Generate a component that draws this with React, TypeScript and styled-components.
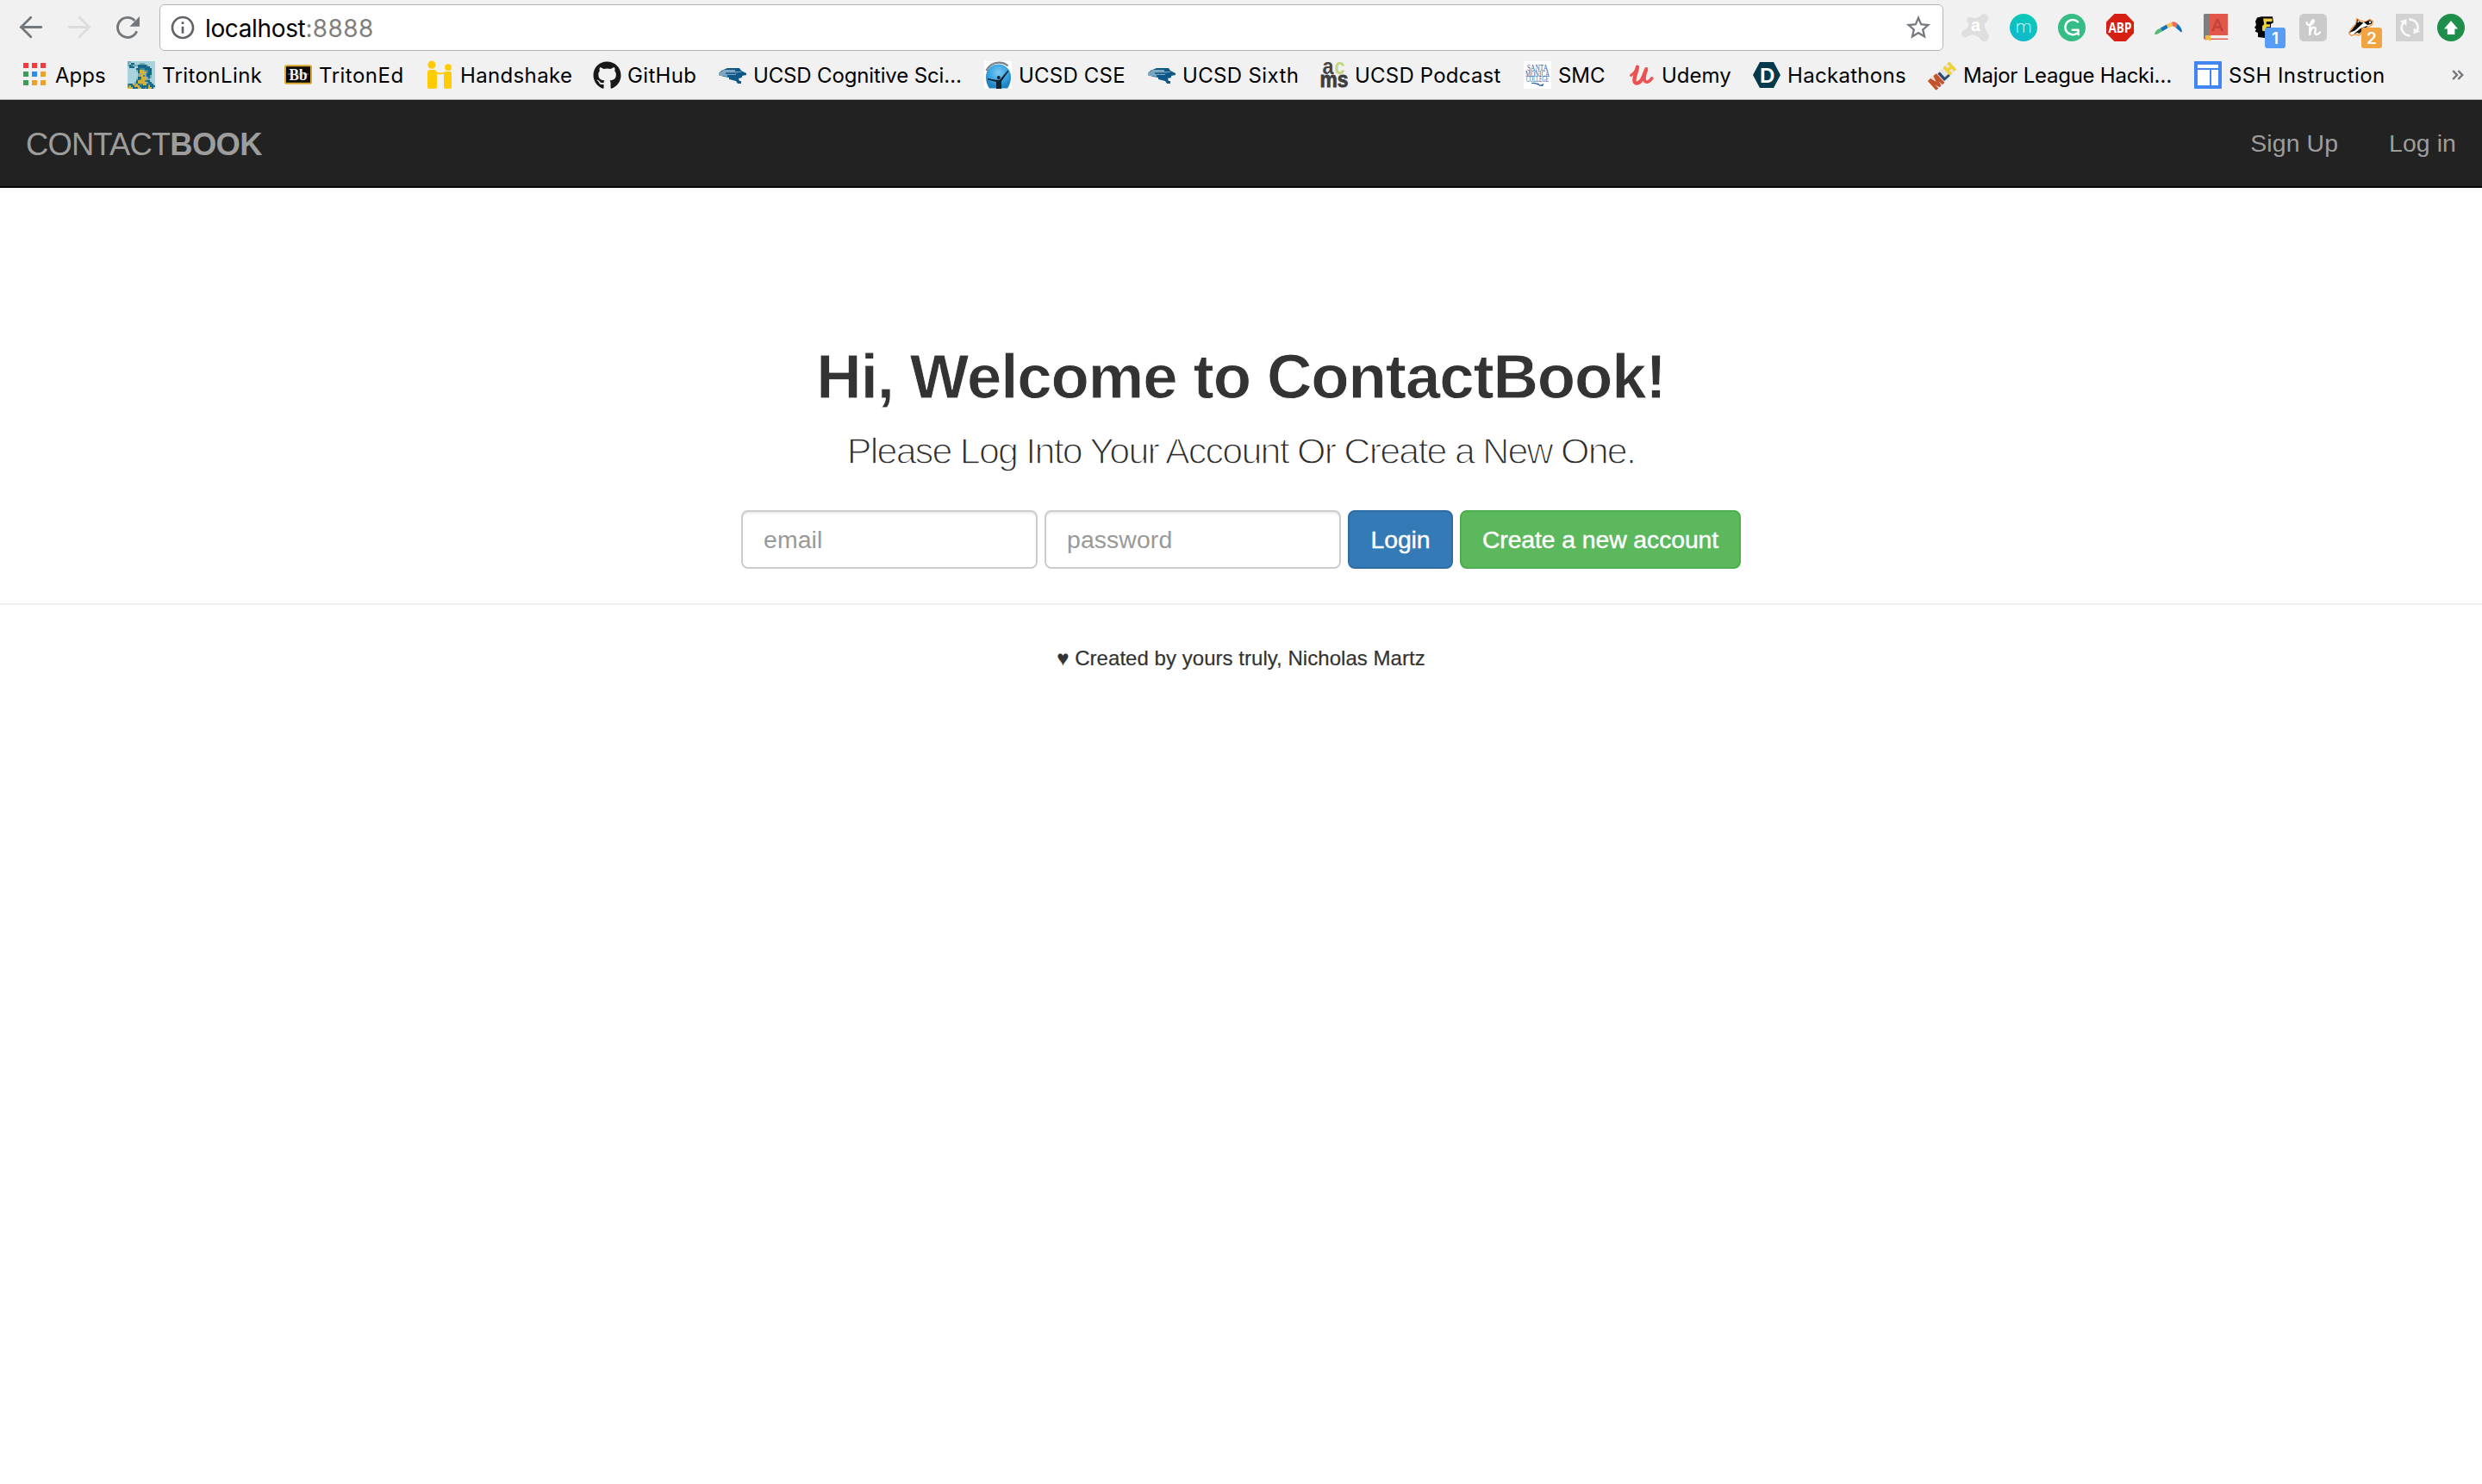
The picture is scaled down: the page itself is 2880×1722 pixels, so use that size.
import React from "react";
import styled, { createGlobalStyle } from "styled-components";
import { FaGithub } from "react-icons/fa";
import { MdStarBorder, MdInfoOutline } from "react-icons/md";

const GlobalStyle = createGlobalStyle`
  * { box-sizing: border-box; }
  html, body { margin: 0; padding: 0; background: #fff; }
  body { font-family: "Liberation Sans", Arial, sans-serif; color: #333; overflow: hidden; }
`;

const Browser = styled.div`
  display: flex;
  flex-direction: column;
  min-height: 1722px;
`;

/* ---------- browser chrome ---------- */

const Chrome = styled.header`
  display: flex;
  flex-direction: column;
  height: 116px;
  background: #f1f1f1;
  border-bottom: 1px solid #b0b0b0;
  font-family: Inter, "Liberation Sans", sans-serif;
  color: #000;
`;

const AddressRow = styled.div`
  display: flex;
  align-items: center;
  height: 64px;
  padding: 0 20px;
`;

const NavControls = styled.div`
  display: flex;
  gap: 24px;
  margin-right: 21px;
`;

const Glyph = styled.svg`
  display: block;
  flex: none;
  width: 32px;
  height: 32px;
  overflow: visible;
`;

const AddressBar = styled.div`
  display: flex;
  align-items: center;
  flex: 1;
  height: 54px;
  padding: 0 11px 0 10px;
  background: #fff;
  border: 1px solid #b3b3b3;
  border-radius: 6px;
  color: #5f6368;
`;

const AddressText = styled.span`
  flex: 1;
  margin-left: 10px;
  padding-top: 1px;
  font-size: 28px;
  line-height: 40px;
  letter-spacing: -0.36px;
  color: #000;
`;

const Port = styled.span`
  letter-spacing: 0.4px;
  color: #7f7f7f;
`;

const Extensions = styled.div`
  display: flex;
  gap: 24px;
  margin-left: 21px;
`;

const Extension = styled.div<{ $pull?: number }>`
  position: relative;
  width: 32px;
  height: 32px;
  margin-left: ${(p) => -(p.$pull ?? 0)}px;
`;

const Badge = styled.span<{ $color: string }>`
  position: absolute;
  left: 16px;
  top: 16px;
  width: 24px;
  height: 24px;
  border-radius: 3px;
  background: ${(p) => p.$color};
  color: #fff;
  font-weight: 600;
  font-size: 19px;
  line-height: 26px;
  text-align: center;
`;

const BookmarkRow = styled.nav`
  display: flex;
  align-items: center;
  height: 46px;
  padding: 0 21px 0 24px;
`;

const Bookmark = styled.div<{ $width: number }>`
  display: flex;
  align-items: center;
  gap: 8px;
  flex: none;
  width: ${(p) => p.$width}px;
`;

const BookmarkLabel = styled.span<{ $tracking: number }>`
  padding-top: 1px;
  font-size: 24px;
  line-height: 32px;
  letter-spacing: ${(p) => p.$tracking}px;
  white-space: nowrap;
`;

const Overflow = styled(Glyph)`
  margin-left: auto;
  width: 14px;
  height: 12px;
`;

/* ---------- page ---------- */

const Navbar = styled.nav`
  display: flex;
  align-items: center;
  justify-content: space-between;
  height: 102px;
  padding: 0 30px;
  background: #222;
  border-bottom: 2px solid #080808;
  color: #9d9d9d;
`;

const Brand = styled.a`
  padding-top: 3px;
  font-size: 36.4px;
  line-height: 40px;
  letter-spacing: -0.85px;

  b { letter-spacing: -0.6px; }
`;

const NavLinks = styled.div`
  display: flex;
  gap: 59px;
`;

const NavLink = styled.a`
  font-size: 28.4px;
  line-height: 40px;
  letter-spacing: 0.1px;
`;

const Hero = styled.main`
  display: flex;
  flex-direction: column;
  align-items: center;
  height: 482px;
  padding-top: 179px;
`;

const Title = styled.h1`
  margin: 0;
  font-size: 72.6px;
  font-weight: 700;
  line-height: 80px;
  letter-spacing: -1.1px;
  -webkit-text-stroke: 0.8px #fff;
`;

const Subtitle = styled.p`
  margin: 23px 0 0;
  font-size: 43px;
  font-weight: 400;
  line-height: 46px;
  letter-spacing: -1.78px;
  color: #2b2b2b;
  -webkit-text-stroke: 1.3px #fff;
`;

const LoginForm = styled.form`
  display: flex;
  gap: 8px;
  margin-top: 46px;
`;

const Field = styled.input`
  width: 344px;
  height: 68px;
  padding: 12px 24px;
  border: 2px solid #ccc;
  border-radius: 8px;
  background: #fff;
  box-shadow: inset 0 2px 2px rgba(0, 0, 0, 0.075);
  font: 28.4px/40px "Liberation Sans", Arial, sans-serif;
  letter-spacing: 0.1px;
  outline: none;

  &::placeholder { color: #999; opacity: 1; }
`;

const Button = styled.button<{ $fill: string; $edge: string; $width: number }>`
  width: ${(p) => p.$width}px;
  height: 68px;
  padding: 0;
  border: 2px solid ${(p) => p.$edge};
  border-radius: 8px;
  background: ${(p) => p.$fill};
  color: #fff;
  font: 28.4px/40px "Liberation Sans", Arial, sans-serif;
  letter-spacing: -0.1px;
  -webkit-text-stroke: 0.4px #fff;
`;

const Footer = styled.footer`
  border-top: 2px solid #eee;
  padding-top: 45px;
  font-size: 24px;
  line-height: 34px;
  letter-spacing: 0.04px;
  text-align: center;
  -webkit-text-stroke: 0.2px #333;
`;

/* ---------- icons ---------- */

const SERIF = "Liberation Serif";
const SANS = "Liberation Sans";

const BackIcon = ({ color }: { color: string }) => (
  <Glyph viewBox="0 0 32 32" fill="none" stroke={color} strokeWidth="2.8" strokeLinecap="round">
    <path d="M4.5 15.5H27.8" />
    <path d="M15.8 4.3L4.5 15.5L15.8 26.7" strokeLinejoin="miter" />
  </Glyph>
);

const ForwardIcon = ({ color }: { color: string }) => (
  <Glyph viewBox="0 0 32 32" fill="none" stroke={color} strokeWidth="2.8" strokeLinecap="round">
    <path d="M4.2 15.5H27.5" />
    <path d="M16.2 4.3L27.5 15.5L16.2 26.7" />
  </Glyph>
);

const ReloadIcon = () => (
  <Glyph viewBox="0 0 32 32">
    <path d="M26.7 20.2A11.5 11.5 0 1 1 24.4 8" fill="none" stroke="#72777c" strokeWidth="2.9" />
    <path d="M30 3V14.7H18.5Z" fill="#72777c" />
  </Glyph>
);

const AppsIcon = () => {
  const colors = ["#f33a3c", "#f33a3c", "#f33a3c", "#3b9c57", "#2a8df4", "#eea02a", "#3b9c57", "#eea02a", "#eea02a"];
  return (
    <Glyph viewBox="0 0 32 32">
      {colors.map((c, i) => (
        <rect key={i} x={3 + (i % 3) * 10} y={2 + Math.floor(i / 3) * 10} width="6" height="6" fill={c} />
      ))}
    </Glyph>
  );
};

const TRITON_ROWS = [
  "bbaaaaaaaaaaaaaa",
  "baddaaabbbaaaaaa",
  "bdcbbbdddddbaaaa",
  "adddaadddddddaaa",
  "aaaaaddcccddddaa",
  "aaaaabdyybccddaa",
  "aaaaaadyyyycddaa",
  "aaaaaabbyybdddaa",
  "aaaaaabyycbddbaa",
  "aaaaaaddyyybdbaa",
  "aaaaabdcyyybbaaa",
  "aaaaadyyyycddaaa",
  "aaaabdyyyyybddaa",
  "cddybydccyydcdda",
  "cyddyyydddddyddd",
  "yyydddyyddcdyyda",
];
const TRITON_COLORS: Record<string, string> = { a: "#a9d3dc", b: "#79a9b3", c: "#4f8583", d: "#13698c", y: "#d7b232" };

const TritonLinkIcon = () => (
  <Glyph viewBox="0 0 16 16" shapeRendering="crispEdges">
    {TRITON_ROWS.flatMap((row, y) =>
      [...row].map((c, x) => <rect key={`${x}-${y}`} x={x} y={y} width="1" height="1" fill={TRITON_COLORS[c]} />)
    )}
  </Glyph>
);

const TritonEdIcon = () => (
  <Glyph viewBox="0 0 32 32">
    <rect x="1" y="5.2" width="30" height="20.6" rx="1.6" fill="#0b0b0b" stroke="#d9a72c" strokeWidth="2" />
    <path d="M4 15H28" stroke="#8a8a8a" strokeWidth="1" />
    <text x="16" y="21.8" textAnchor="middle" textLength="21" lengthAdjust="spacingAndGlyphs" fontFamily={SERIF} fontSize="19" fontWeight="700" fill="#f4f4f4">Bb</text>
  </Glyph>
);

const HandshakeIcon = () => (
  <Glyph viewBox="0 0 32 32" fill="#ffcb05">
    <circle cx="7" cy="4.2" r="4.6" />
    <circle cx="26" cy="7.2" r="3.9" />
    <path d="M2 13.5Q2 10 5 10H9.5Q12.3 10 12.8 12.4Q18 14.6 21.5 12.6Q22.3 12 24 12H28Q30 12 30 14V30Q30 32 28 32H23Q21 32 21 30V14.6Q17 16.2 13 14.5V30Q13 32 11 32H4Q2 32 2 30Z" />
  </Glyph>
);

const GithubIcon = styled(FaGithub)`
  flex: none;
  width: 33px;
  height: 33px;
  margin-right: -1px;
  color: #191717;
`;

const TridentIcon = () => (
  <Glyph viewBox="0 0 32 32">
    <path d="M10 8H24L26 11L32 14V16L27 17V19L23 20L24 23H26V26H22L20 23L12 21V19L6 18L0 16V14L3 11Z" fill="#0d5886" />
    <path d="M6 10H19V12H26V13H8V15H20V16H10V18L0 16.5V14Z" fill="#7ea6c0" />
    <path d="M8 13H22V14.6H8Z" fill="#2a6c95" />
  </Glyph>
);

const CseIcon = () => (
  <Glyph viewBox="0 0 32 32">
    <defs>
      <radialGradient id="cse" cx="0.5" cy="0.35" r="0.6">
        <stop offset="0" stopColor="#7cc9f2" />
        <stop offset="0.6" stopColor="#3ba6e2" />
        <stop offset="1" stopColor="#1f82c2" />
      </radialGradient>
    </defs>
    <rect width="32" height="32" fill="#fff" />
    <path d="M6 31.5Q2 26 2 18A14.5 14.5 0 0 1 31 18Q31 26 27 31.5Z" fill="url(#cse)" />
    <path d="M2.5 11Q7 1.8 17 1.6Q24 1.6 27.5 5.5" fill="none" stroke="#7b8289" strokeWidth="2.4" />
    <path d="M4 20L13.5 21.8H18L27.4 10.6L28.4 11.6L20 23.5V32H14V24L4 21.4Z" fill="#16222e" />
    <circle cx="16.8" cy="19" r="2" fill="#16222e" />
  </Glyph>
);

const AcmsIcon = () => (
  <Glyph viewBox="0 0 32 32" fontFamily={SANS} fontWeight="700" fontSize="25">
    <text x="2.5" y="14.6" textLength="13" lengthAdjust="spacingAndGlyphs" fill="#444">a</text>
    <text x="16.5" y="14.6" textLength="12" lengthAdjust="spacingAndGlyphs" fill="#c3d67c">c</text>
    <text x="-0.5" y="30" textLength="33" lengthAdjust="spacingAndGlyphs" fill="#3d3d3d" stroke="#3d3d3d" strokeWidth="0.8">ms</text>
  </Glyph>
);

const SmcIcon = () => (
  <Glyph viewBox="0 0 32 32">
    <rect width="32" height="32" fill="#fff" />
    <g fontFamily={SERIF} fontSize="9.5" fill="#2f63a8">
      <text x="4" y="10.5" textLength="24" lengthAdjust="spacingAndGlyphs">SANTA</text>
      <text x="2" y="17.5" textLength="28" lengthAdjust="spacingAndGlyphs">MONICA</text>
      <text x="3" y="24" textLength="26" lengthAdjust="spacingAndGlyphs">COLLEGE</text>
    </g>
    <path d="M9 25.5Q14 25 17 27Q20 29.3 23 26.5M16 26Q19 29 22.5 28.2" fill="none" stroke="#2f63a8" strokeWidth="1.2" />
  </Glyph>
);

const UdemyIcon = () => (
  <Glyph viewBox="0 0 32 32" fill="none" stroke="#ec5252" strokeLinecap="round" strokeLinejoin="round">
    <path d="M4.5 16.5C7.5 14.5 10.5 10.5 11.6 7.5" strokeWidth="3" />
    <path d="M12 6.8C11.4 12 8.2 18 8.4 22.5C8.6 27.2 15 26.4 18.4 19L22 10" strokeWidth="4.4" />
    <path d="M22.4 8.8C21 13.5 19.4 18 20.2 22C21.2 25.8 26 24.4 28.8 19.8" strokeWidth="3.6" />
  </Glyph>
);

const HackathonsIcon = () => (
  <Glyph viewBox="0 0 32 32">
    <path d="M8 1H24L32 16L24 31H8L0 16Z" fill="#053a4c" />
    <text x="16.6" y="24.6" textAnchor="middle" fontFamily={SANS} fontWeight="700" fontSize="24" fill="#fff">D</text>
  </Glyph>
);

const MlhIcon = () => (
  <Glyph viewBox="0 0 32 32" fontFamily={SANS} fontWeight="700">
    <g transform="translate(16 16) rotate(-42) scale(0.94)">
      <path d="M-17 -8L-4 -7L7 -6L18 -7V6L7 8L-16 9Z" fill="#e4dcd8" opacity="0.6" />
      <text x="-19" y="8" textLength="15" lengthAdjust="spacingAndGlyphs" fontSize="20" fill="#c4532d" stroke="#c4532d" strokeWidth="1.6">M</text>
      <text x="-4" y="6.4" textLength="10" lengthAdjust="spacingAndGlyphs" fontSize="16" fill="#2c4a68" stroke="#2c4a68" strokeWidth="1">L</text>
      <text x="6" y="6" textLength="12" lengthAdjust="spacingAndGlyphs" fontSize="17" fill="#f0d22c" stroke="#f0d22c" strokeWidth="1">H</text>
    </g>
  </Glyph>
);

const SitesIcon = () => (
  <Glyph viewBox="0 0 32 32">
    <rect width="32" height="32" rx="0.8" fill="#4285f4" />
    <path d="M4 4H28V8H4ZM4 10H18V28H4ZM20 10H28V28H20Z" fill="#fff" />
  </Glyph>
);

const AvastIcon = () => (
  <Glyph viewBox="0 0 32 32">
    <path d="M6.5 6Q8 2.5 12 4.2Q16.5 6.4 21.5 3Q24-1 28.5 .6Q33 4.6 29.5 9Q25 12 28 18Q29.5 21.5 31 23.5Q33 28 30 31Q26 33.6 23 30.5Q19 25.5 14 24.6Q9 24.4 6.5 26.4Q2 28.6 .4 25Q-1 20.6 3.6 18.8Q8.6 16 8 11.5Q6 9 6.5 6Z" fill="#dedede" />
    <text x="16.4" y="20.4" textAnchor="middle" fontFamily={SANS} fontSize="19.5" fontWeight="700" fill="#fff">a</text>
  </Glyph>
);

const MIcon = () => (
  <Glyph viewBox="0 0 32 32">
    <defs>
      <linearGradient id="mgrad" x1="0.7" y1="0" x2="0.3" y2="1">
        <stop offset="0" stopColor="#09cbb5" />
        <stop offset="1" stopColor="#0fb7d0" />
      </linearGradient>
    </defs>
    <circle cx="16" cy="16" r="16" fill="url(#mgrad)" />
    <text x="16" y="21.6" textAnchor="middle" fontFamily="Roboto" fontWeight="200" fontSize="21" fill="#eafffd">m</text>
  </Glyph>
);

const GrammarlyIcon = () => (
  <Glyph viewBox="0 0 32 32">
    <circle cx="16" cy="16" r="16" fill="#36bd85" />
    <path d="M23 9.4A8.6 8.6 0 1 0 22.2 22.4" fill="none" stroke="#fff" strokeWidth="2.5" strokeLinecap="round" />
    <path d="M16.8 18.8H23.6V24.2" fill="none" stroke="#fff" strokeWidth="2.4" strokeLinejoin="round" strokeLinecap="round" />
  </Glyph>
);

const AbpIcon = () => (
  <Glyph viewBox="0 0 32 32">
    <path d="M9.4 0H22.6L32 9.4V22.6L22.6 32H9.4L0 22.6V9.4Z" fill="#d61f13" />
    <text x="16" y="21.6" textAnchor="middle" textLength="27" lengthAdjust="spacingAndGlyphs" fontFamily="Open Sans" fontWeight="700" fontSize="16" fill="#fff">ABP</text>
  </Glyph>
);

const BoomerangIcon = () => (
  <Glyph viewBox="0 0 32 32">
    <path d="M.2 24Q-.2 21 3.6 18.2L7.2 16.2L8.6 20.4Q3.5 24.2 .2 24Z" fill="#5bb974" />
    <path d="M7.2 16.2L14 12.6L15.6 16.6L8.6 20.4Z" fill="#1173b8" />
    <path d="M14 12.6L20.2 9.4L20.8 14.6L15.6 16.6Z" fill="#f8c24f" />
    <path d="M20.2 9.4Q24.2 8.4 26.6 11.4L25 16.4Q23 14.2 20.8 14.6Z" fill="#f06a4b" />
    <path d="M26.6 11.4Q31.6 16 32 20.4Q31 22.2 29.2 20L25 16.4Z" fill="#1173b8" />
  </Glyph>
);

const BookIcon = () => (
  <Glyph viewBox="0 0 32 32">
    <path d="M1 2Q1 0 3 0H29V30H3Q1 30 1 28Z" fill="#e3574a" />
    <path d="M1 2Q1 0 3 0H7V26L1 28Z" fill="#7c8082" />
    <path d="M8 25H29V28.6H8Z" fill="#f4eeee" />
    <path d="M3 25H9V32L6 29.6L3 31.5Z" fill="#efbb38" />
    <text x="17" y="20.4" textAnchor="middle" fontFamily={SANS} fontSize="20" fill="#c04338" stroke="#c04338" strokeWidth="0.5">A</text>
  </Glyph>
);

const FIcon = () => (
  <Glyph viewBox="0 0 32 32">
    <path d="M7 4.5L12 3.2H25L26 10L23 12V22L16 28L8 27V22L4.6 20.5L6 18L4 16L6 13L5 9Z" fill="#050505" />
    <path d="M14 5.5H24.5V9H17.8V12.2H22V15.2H17.8V21L13 19.5V14.6L15.2 12Z" fill="#f4d03c" />
  </Glyph>
);

const HoneyIcon = () => (
  <Glyph viewBox="0 0 32 32">
    <rect width="32" height="32" rx="5.5" fill="#cacaca" />
    <path d="M8.6 10.2Q8.4 13.4 12 12.8Q16.6 11.6 17 8.4Q16.6 5.6 14.4 8.6Q11.6 14 12.2 24.2Q13.2 16 16.8 15.6Q19.6 15.6 18.6 19.6Q17.4 24.2 20.2 24Q22.6 23.4 24 21.4" fill="none" stroke="#fff" strokeWidth="2.2" strokeLinecap="round" strokeLinejoin="round" />
  </Glyph>
);

const BadgerIcon = () => (
  <Glyph viewBox="0 0 32 32">
    <path d="M1.4 22.5L5 16.5L9.6 11.8L10.8 5.6L14.6 7.8L21 9.4L25.6 6.4L29.4 8.6L28.6 12.4L24 15.5L21 18L13 25L9.5 23.6L4.4 25.4Z" fill="#fff" stroke="#f08a2c" strokeWidth="1.2" />
    <path d="M2 22L9.8 12.6L11.4 6.6L14 9L18.5 10.5L8.5 19.5Z" fill="#0b0b0b" />
    <path d="M19 10L25.6 7.2L28.6 9L27.6 12L23 13Z" fill="#0b0b0b" />
    <path d="M7 23.6L15 17L24 13.4L20.5 17.5L13.4 23L11 22Z" fill="#151515" />
    <circle cx="26" cy="9.8" r="1.2" fill="#fff" />
    <circle cx="12.4" cy="9.2" r="0.9" fill="#fff" />
  </Glyph>
);

const SyncIcon = () => (
  <Glyph viewBox="0 0 32 32">
    <rect width="32" height="32" fill="#d2d2d2" />
    <g opacity="0.85">
      <path d="M8.6 10.5A9.4 9.4 0 0 0 16.6 25.4" fill="none" stroke="#fff" strokeWidth="2.8" />
      <path d="M15.4 6.6A9.4 9.4 0 0 1 25 19" fill="none" stroke="#fff" strokeWidth="2.8" />
      <path d="M4.6 8.4L12.4 6V14Z" fill="#fff" />
      <path d="M28.4 20.6L20.4 23.6L20.8 16.4Z" fill="#fff" />
    </g>
  </Glyph>
);

const UpdateIcon = () => (
  <Glyph viewBox="0 0 32 32">
    <circle cx="16" cy="16" r="16" fill="#1f8e4a" />
    <path d="M16 8L24 17.4H20.4V24H11.8V17.4H8Z" fill="#fff" />
  </Glyph>
);

/* ---------- data ---------- */

const bookmarks: { label: string; width: number; tracking: number; icon: React.ReactNode }[] = [
  { label: "Apps", width: 124, tracking: 0, icon: <AppsIcon /> },
  { label: "TritonLink", width: 182, tracking: 0.4, icon: <TritonLinkIcon /> },
  { label: "TritonEd", width: 164, tracking: 0.5, icon: <TritonEdIcon /> },
  { label: "Handshake", width: 194, tracking: 0.35, icon: <HandshakeIcon /> },
  { label: "GitHub", width: 146, tracking: 0.35, icon: <GithubIcon /> },
  { label: "UCSD Cognitive Sci…", width: 308, tracking: -0.15, icon: <TridentIcon /> },
  { label: "UCSD CSE", width: 190, tracking: 0.2, icon: <CseIcon /> },
  { label: "UCSD Sixth", width: 200, tracking: 0.35, icon: <TridentIcon /> },
  { label: "UCSD Podcast", width: 236, tracking: 0.2, icon: <AcmsIcon /> },
  { label: "SMC", width: 120, tracking: -0.1, icon: <SmcIcon /> },
  { label: "Udemy", width: 146, tracking: 0, icon: <UdemyIcon /> },
  { label: "Hackathons", width: 204, tracking: 0.3, icon: <HackathonsIcon /> },
  { label: "Major League Hacki…", width: 308, tracking: -0.25, icon: <MlhIcon /> },
  { label: "SSH Instruction", width: 230, tracking: 0.4, icon: <SitesIcon /> },
];

export default function App() {
  return (
    <Browser>
      <GlobalStyle />
      <Chrome>
        <AddressRow>
          <NavControls>
            <BackIcon color="#72777c" />
            <ForwardIcon color="#dadcdd" />
            <ReloadIcon />
          </NavControls>
          <AddressBar>
            <MdInfoOutline size={32} />
            <AddressText>
              localhost<Port>:8888</Port>
            </AddressText>
            <MdStarBorder size={34} color="#757a80" />
          </AddressBar>
          <Extensions>
            <Extension><AvastIcon /></Extension>
            <Extension><MIcon /></Extension>
            <Extension><GrammarlyIcon /></Extension>
            <Extension><AbpIcon /></Extension>
            <Extension><BoomerangIcon /></Extension>
            <Extension><BookIcon /></Extension>
            <Extension><FIcon /><Badge $color="#579df5">1</Badge></Extension>
            <Extension><HoneyIcon /></Extension>
            <Extension><BadgerIcon /><Badge $color="#f0a444">2</Badge></Extension>
            <Extension><SyncIcon /></Extension>
            <Extension $pull={8}><UpdateIcon /></Extension>
          </Extensions>
        </AddressRow>
        <BookmarkRow>
          {bookmarks.map((b) => (
            <Bookmark key={b.label} $width={b.width}>
              {b.icon}
              <BookmarkLabel $tracking={b.tracking}>{b.label}</BookmarkLabel>
            </Bookmark>
          ))}
          <Overflow viewBox="0 0 14 12" fill="none" stroke="#75797e" strokeWidth="2.5">
            <path d="M1.2 1L6 6L1.2 11M7.4 1L12.2 6L7.4 11" />
          </Overflow>
        </BookmarkRow>
      </Chrome>

      <Navbar>
        <Brand>
          CONTACT<b>BOOK</b>
        </Brand>
        <NavLinks>
          <NavLink>Sign Up</NavLink>
          <NavLink>Log in</NavLink>
        </NavLinks>
      </Navbar>

      <Hero>
        <Title>Hi, Welcome to ContactBook!</Title>
        <Subtitle>Please Log Into Your Account Or Create a New One.</Subtitle>
        <LoginForm>
          <Field type="text" placeholder="email" />
          <Field type="text" placeholder="password" />
          <Button type="button" $fill="#337ab7" $edge="#2e6da4" $width={122}>Login</Button>
          <Button type="button" $fill="#5cb85c" $edge="#4cae4c" $width={326}>Create a new account</Button>
        </LoginForm>
      </Hero>

      <Footer>♥ Created by yours truly, Nicholas Martz</Footer>
    </Browser>
  );
}
